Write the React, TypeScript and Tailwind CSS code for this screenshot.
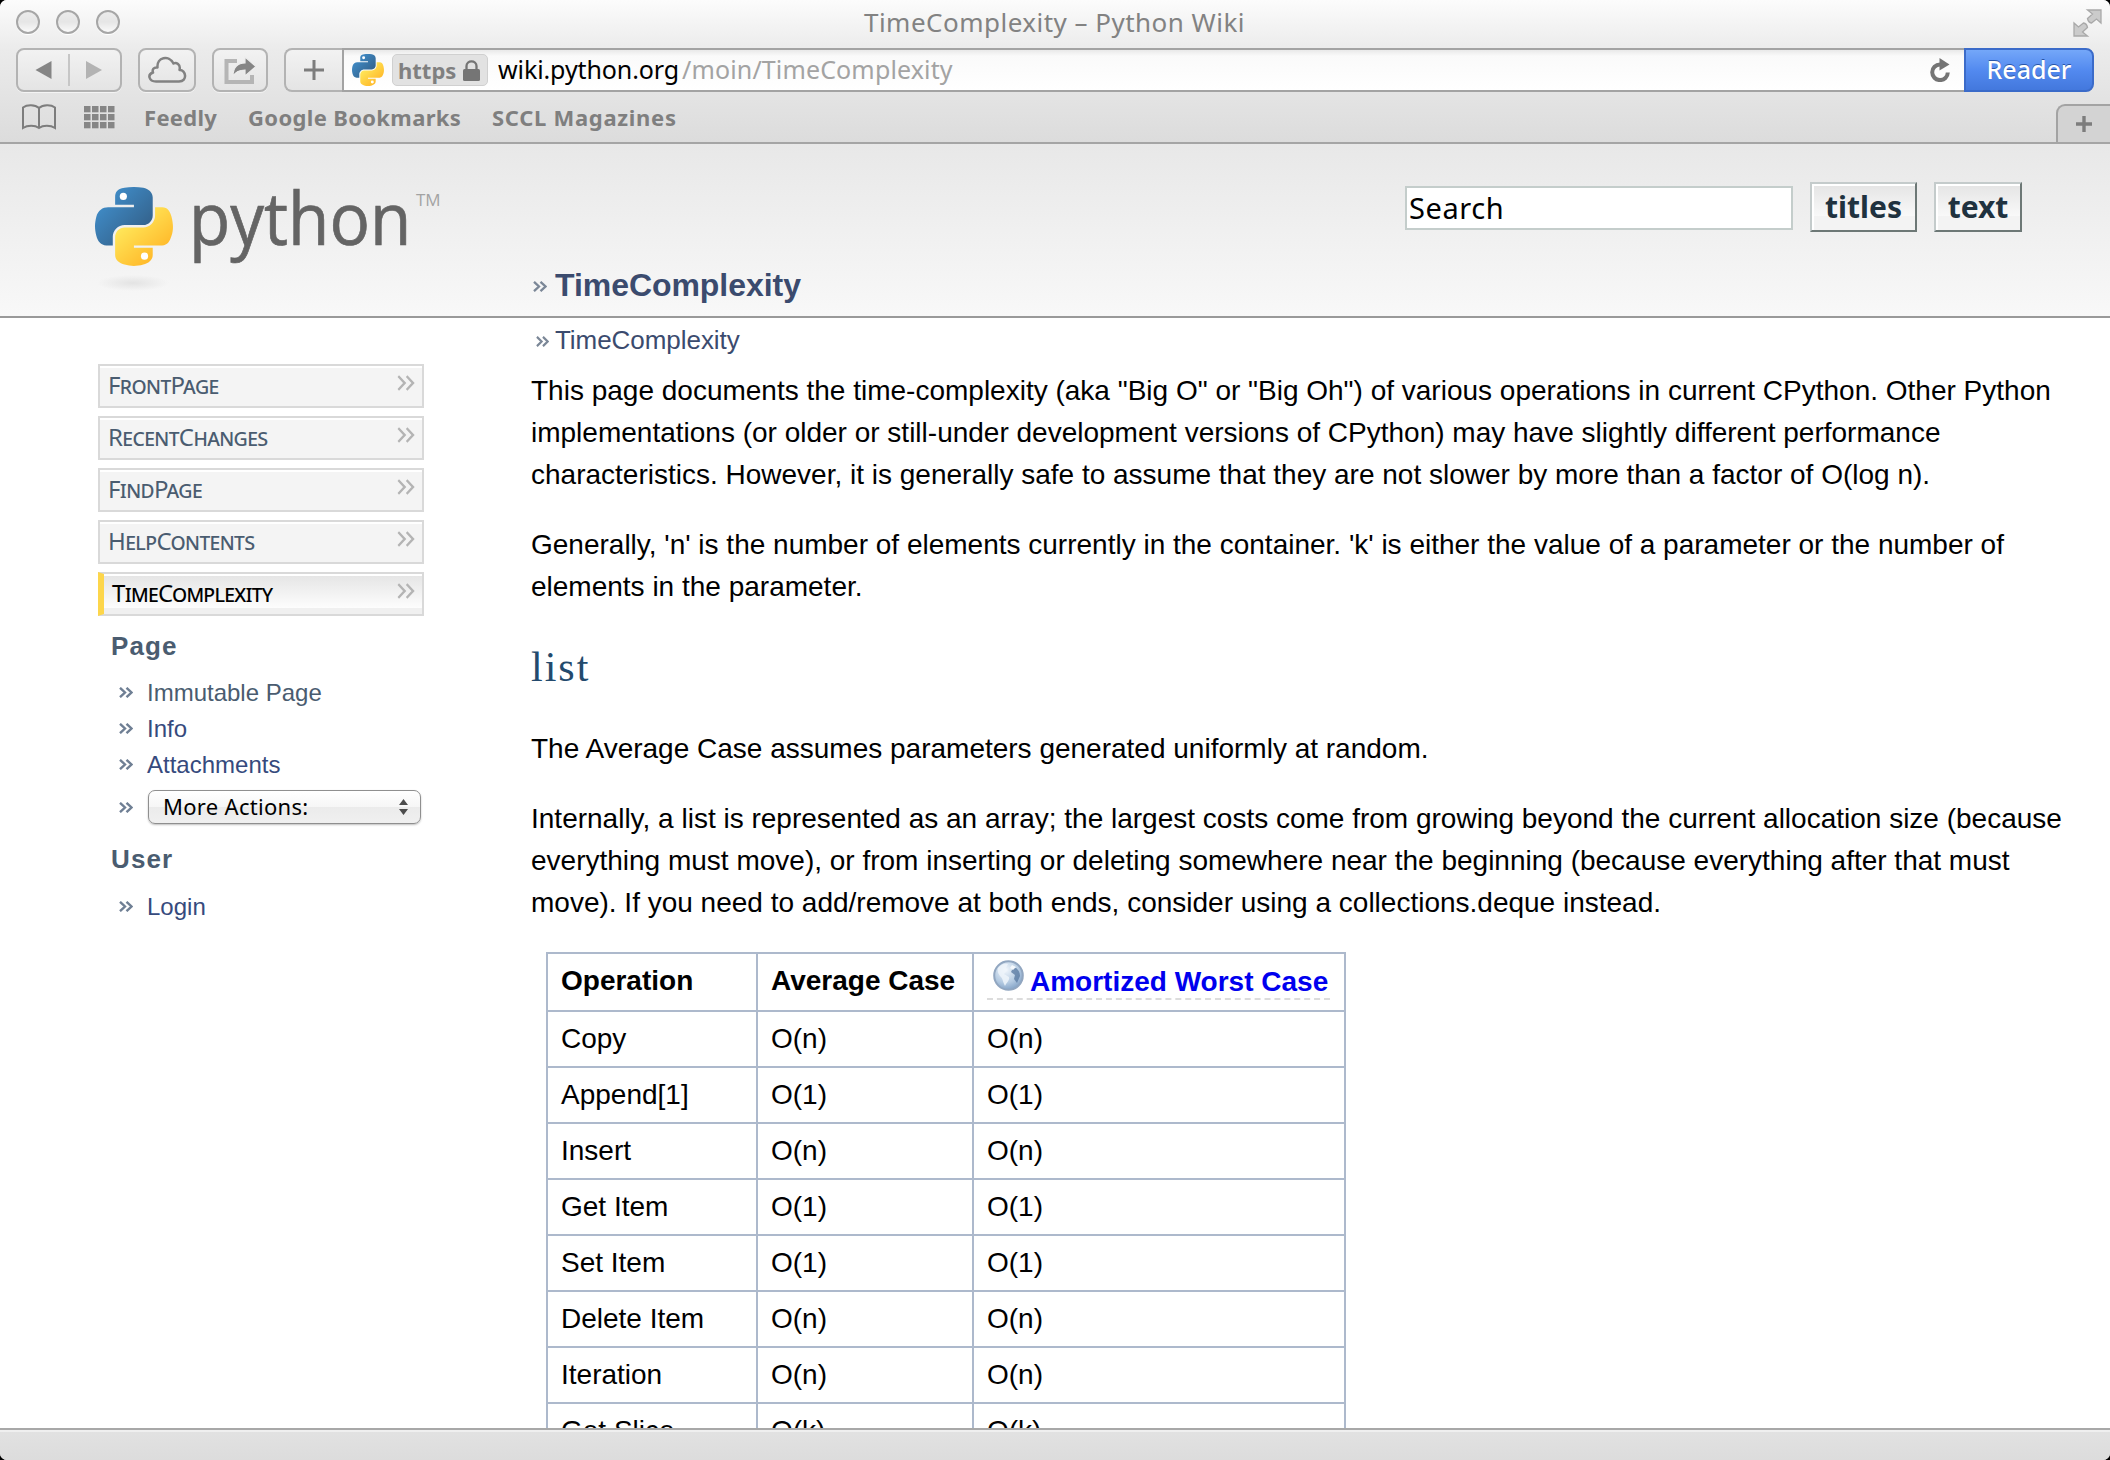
import type { ReactNode } from "react";

const OPERATIONS: [string, string, string][] = [
  ["Copy", "O(n)", "O(n)"],
  ["Append[1]", "O(1)", "O(1)"],
  ["Insert", "O(n)", "O(n)"],
  ["Get Item", "O(1)", "O(1)"],
  ["Set Item", "O(1)", "O(1)"],
  ["Delete Item", "O(n)", "O(n)"],
  ["Iteration", "O(n)", "O(n)"],
  ["Get Slice", "O(k)", "O(k)"],
];

const NAV = ["FrontPage", "RecentChanges", "FindPage", "HelpContents"];

function PythonMark({ id, className }: { id: string; className: string }) {
  return (
    <svg className={className} viewBox="0 0 111.2 112.4" preserveAspectRatio="none" aria-hidden="true">
      <defs>
        <linearGradient id={id + "-b"} x1="0.1" y1="0.1" x2="0.8" y2="0.8">
          <stop offset="0" stopColor="#4191cf" />
          <stop offset="1" stopColor="#34638d" />
        </linearGradient>
        <linearGradient id={id + "-y"} x1="0.2" y1="0.2" x2="0.75" y2="0.85">
          <stop offset="0" stopColor="#ffe95c" />
          <stop offset="1" stopColor="#ffb829" />
        </linearGradient>
      </defs>
      <path
        fill={`url(#${id}-b)`}
        d="M54.92 0C50.34.02 45.96.41 42.1 1.1 30.76 3.1 28.7 7.3 28.7 15.03v10.22h26.81v3.4H18.64c-7.8 0-14.62 4.69-16.75 13.6-2.46 10.21-2.57 16.59 0 27.25 1.9 7.94 6.46 13.6 14.25 13.6h9.22V70.84c0-8.85 7.65-16.65 16.75-16.65h26.78c7.45 0 13.4-6.14 13.4-13.63V15.03c0-7.26-6.13-12.72-13.4-13.94C64.28.33 59.5-.02 54.92 0Z"
      />
      <path
        fill={`url(#${id}-y)`}
        d="M85.64 28.66v11.9c0 9.24-7.83 17.01-16.75 17.01H42.1c-7.33 0-13.4 6.27-13.4 13.62v25.53c0 7.27 6.32 11.54 13.4 13.63 8.49 2.5 16.63 2.95 26.79 0 6.75-1.96 13.4-5.9 13.4-13.63V86.5H55.51v-3.4H95.7c7.79 0 10.7-5.44 13.4-13.6 2.8-8.4 2.68-16.47 0-27.25-1.92-7.75-5.6-13.59-13.4-13.59H85.64Z"
      />
      <circle cx="40.4" cy="13.4" r="5.1" fill="#fff" />
      <circle cx="70.6" cy="98.4" r="5.1" fill="#fff" />
    </svg>
  );
}

function Chevrons({ className }: { className: string }) {
  return (
    <svg className={className} viewBox="0 0 14 11" preserveAspectRatio="none" fill="none" stroke="currentColor" aria-hidden="true">
      <path d="M1 .8 6 5.5 1 10.2M7.5.8l5 4.7-5 4.7" />
    </svg>
  );
}

const chromeButton =
  "flex h-11 shrink-0 items-center justify-center rounded-[8px] border-2 border-[#b3b3b3] bg-gradient-to-b from-[#f2f2f2] to-[#e4e4e4] shadow-[0_1px_0_#f4f4f4]";

function Browser() {
  return (
    <div className="h-36 shrink-0 border-b-2 border-[#a5a5a5] bg-gradient-to-b from-[#fcfcfc] via-[#ebebeb] via-35% to-[#dcdcdc]">
      <div className="relative flex h-12 items-start">
        <div className="flex gap-4 pt-2.5 pl-4">
          {[0, 1, 2].map((i) => (
            <span key={i} className="size-6 rounded-full border-2 border-[#a6a6a6] bg-gradient-to-b from-[#ececec] via-[#e6e6e6] to-[#fafafa] shadow-[0_1px_0_#fff]" />
          ))}
        </div>
        <h1 className="absolute top-0 left-[864px] text-[26px] leading-[44px] tracking-[0.48px] whitespace-nowrap text-[#828282]">
          TimeComplexity – Python Wiki
        </h1>
        <svg className="absolute top-[9px] left-[2073px] h-7 w-[29px]" viewBox="0 0 29 28" fill="#cbcbcb" stroke="#a9a9a9" strokeWidth="1.3" aria-hidden="true">
          <path d="M14.5 1H28v13l-4.5-4-5 4c-2.5-.5-3.500-2-4-4.500l5-4.500z" />
          <path d="M14.500 27H1V14l4.500 4 5-4c2.500.5 3.500 2 4 4.500l-5 4.500z" />
        </svg>
      </div>

      <div className="flex h-11 pl-4">
        <div className={chromeButton + " w-[106px]"}>
          <svg className="h-full w-full" viewBox="0 0 101 40" aria-hidden="true">
            <path d="M17 20 33 11v18z" fill="#858585" />
            <path d="M83.500 20 67.500 11v18z" fill="#b3b3b3" />
            <path d="M50.500 4v32" stroke="#c6c6c6" strokeWidth="2" />
          </svg>
        </div>
        <div className={chromeButton + " ml-4 w-[58px]"}>
          <svg className="h-[30px] w-[40px]" viewBox="0 0 40 30" fill="none" stroke="#828282" strokeWidth="2.500" strokeLinejoin="round" aria-hidden="true">
            <path d="M9 26.500h23c9 0 7-12 .5-11.500C34 9 29 7 26.500 8.500 22-.5 9.500 2 10.500 12.500c-4-.5-5.500 2-4.500 5-6 2-4 9 3 9Z" />
          </svg>
        </div>
        <div className={chromeButton + " ml-4 w-[56px]"}>
          <svg className="h-7 w-[34px]" viewBox="0 0 34 28" fill="none" aria-hidden="true">
            <path d="M14 5H3.500v21H29v-7" stroke="#b5b5b5" strokeWidth="4" />
            <path d="M10 20c0-9 5-13 12-13V1l11 9.500L22 20v-6c-6 0-9 1.500-12 6z" fill="#858585" stroke="#ececec" strokeWidth="1.200" />
          </svg>
        </div>
        <div className="ml-4 flex h-11 w-[1810px] shrink-0">
          <div className="flex w-[58px] items-center justify-center rounded-l-[8px] border-2 border-r-0 border-[#b3b3b3] bg-gradient-to-b from-[#f2f2f2] to-[#e4e4e4]">
            <svg className="size-5" viewBox="0 0 20 20" stroke="#7d7d7d" strokeWidth="3" aria-hidden="true">
              <path d="M10 0v20M0 10h20" />
            </svg>
          </div>
          <div className="flex flex-1 items-center border-y-2 border-l-2 border-[#a3a3a3] bg-gradient-to-b from-[#e9e9e9] via-[#fafafa] via-15% to-white pl-2">
            <PythonMark id="fav" className="size-8" />
            <span className="ml-2 flex h-8 w-24 items-center gap-[7px] rounded-[5px] border border-[#d0d0d0] bg-[#e2e2e2] pl-[5px] text-[22px] font-bold text-[#808080]">
              https
              <svg className="h-[21px] w-[17px]" viewBox="0 0 17 21" aria-hidden="true">
                <path d="M3.500 10V6c0-6.200 10-6.200 10 0v4" fill="none" stroke="#757575" strokeWidth="2.300" />
                <rect y="9" width="17" height="12" rx="1.500" fill="#757575" />
              </svg>
            </span>
            <span className="ml-[10px] text-[25px] tracking-[-0.1px] text-black">wiki.python.org</span>
            <span className="ml-[3px] text-[25px] tracking-[0.13px] text-[#a3a3a3]">/moin/TimeComplexity</span>
            <svg className="mr-[13px] ml-auto h-6 w-[22px]" viewBox="0 0 22 24" aria-hidden="true">
              <path d="M11 6.500A7.800 7.800 0 1 0 18.800 14.500" fill="none" stroke="#747474" strokeWidth="4" />
              <path d="M10.500 0v12.500L20.500 6.500z" fill="#747474" />
            </svg>
          </div>
          <div className="flex w-[130px] items-center justify-center rounded-r-[8px] border-2 border-[#3b6bc9] bg-gradient-to-b from-[#74a7f9] via-[#5289ef] via-52% to-[#4378dd] text-[25px] font-medium text-white [text-shadow:0_-1px_0_#2a55a8]">
            Reader
          </div>
        </div>
      </div>

      <div className="flex h-[50px] items-center pl-[21px] text-[22px] font-bold text-[#7f7f7f]">
        <svg className="h-[26px] w-[36px]" viewBox="0 0 36 26" fill="none" stroke="#7d7d7d" strokeWidth="2" aria-hidden="true">
          <path d="M18 4C14 .5 6 .5 2 3.500V24c4.500-3 12-3 16 0 4-3 11.500-3 16 0V3.500C30 .5 22 .5 18 4ZM18 4v20" />
        </svg>
        <svg className="ml-[27px] h-[23px] w-[31px]" viewBox="0 0 31 23" fill="#868686" aria-hidden="true">
          {[0, 8, 16].map((y) =>
            [0, 8, 16, 24].map((x) => <rect key={x + "-" + y} x={x} y={y} width="6.500" height="6.300" />),
          )}
        </svg>
        <span className="ml-[29px] w-[104px] tracking-[0.3px]">Feedly</span>
        <span className="w-[244px] tracking-[0.35px]">Google Bookmarks</span>
        <span className="tracking-[0.7px]">SCCL Magazines</span>
        <div className="ml-auto flex h-[38px] w-[54px] items-center justify-center self-end rounded-tl-[9px] border-t-2 border-l-2 border-[#a3a3a3] bg-[#d3d3d3]">
          <svg className="-ml-px size-4" viewBox="0 0 16 16" stroke="#7d7d7d" strokeWidth="3.400" aria-hidden="true">
            <path d="M8 0v16M0 8h16" />
          </svg>
        </div>
      </div>
    </div>
  );
}

function SearchButton({ children, className }: { children: ReactNode; className: string }) {
  return (
    <button
      className={
        "h-[50px] border-2 border-t-[#c4cbcb] border-r-[#6d7876] border-b-[#6d7876] border-l-[#c4cbcb] bg-[linear-gradient(to_bottom,#e4e4e4,#f9f9f9_70%,#f3f3f3_70%)] text-[30px] leading-[46px] font-bold text-[#20323f] shadow-[inset_2px_2px_0_#fff] " +
        className
      }
    >
      {children}
    </button>
  );
}

function SiteHeader() {
  return (
    <header className="flex h-[174px] shrink-0 border-b-2 border-[#999] bg-gradient-to-b from-[#e8e8e8] to-[#f8f8f8]">
      <div className="relative w-[531px] shrink-0 pt-[43px] pl-[95px]">
        <PythonMark id="logo" className="h-[79px] w-[78px]" />
        <div className="mt-[9px] ml-[2px] h-4 w-[72px] bg-[radial-gradient(closest-side,#e3e3e3,transparent)]" />
        <span className="absolute top-[26px] left-[189px] origin-left scale-x-[0.93] font-['Open_Sans',sans-serif] text-[72.5px] leading-[94px] text-[#646464] [-webkit-text-stroke:0.7px_#646464]">
          python
        </span>
        <span className="absolute top-[45px] left-[416px] font-['Open_Sans',sans-serif] text-[17px] leading-[22px] text-[#a3a3a3]">TM</span>
      </div>
      <div className="flex flex-1 flex-col">
        <div className="flex h-[121px] justify-end pt-[38px] pr-[88px]">
          <div className="mt-1 mr-[17px] h-11 w-[388px] border-2 border-[#c4cdcb] bg-white pl-0.5 text-[29px] leading-10 tracking-[0.6px] text-black">
            Search
          </div>
          <SearchButton className="mr-[17px] w-[107px]">titles</SearchButton>
          <SearchButton className="w-[88px]">text</SearchButton>
        </div>
        <div className="flex h-10 items-center font-['Liberation_Sans',Arial,sans-serif] text-[32px] font-bold tracking-[-0.05px] text-[#3b4b6e]">
          <Chevrons className="mt-0.5 mr-[8px] ml-[2px] h-[11px] w-[14px] stroke-[2.3] text-[#7b8797]" />
          TimeComplexity
        </div>
      </div>
    </header>
  );
}

function SideItem({ children, className }: { children: ReactNode; className: string }) {
  return (
    <li className="flex h-9 items-center">
      <Chevrons className="mr-[14px] ml-[21px] h-[11px] w-[14px] stroke-[2.4] text-[#6f7f94]" />
      <span className={"pt-px leading-9 " + className}>{children}</span>
    </li>
  );
}

function Sidebar() {
  return (
    <nav className="w-[531px] shrink-0 pt-[46px] pl-[98px] font-['Liberation_Sans',Arial,sans-serif] text-2xl">
      <ul className="flex w-[326px] flex-col gap-2 font-['Noto_Sans',sans-serif] tracking-[-0.6px] [font-variant:small-caps]">
        {NAV.map((name) => (
          <li key={name} className="flex h-11 justify-between border-2 border-[#d9d9d9] bg-[#f4f4f4] pr-[7px] pl-2 leading-[38px] text-[#4a5c70] shadow-[inset_0_2px_0_#fff]">
            {name}
            <Chevrons className="mt-[9px] h-4 w-[18px] stroke-[1.700] text-[#b4b4b4]" />
          </li>
        ))}
        <li className="flex h-11 justify-between border-2 border-l-[6px] border-[#d9d9d9] border-l-[#fdd64b] bg-[linear-gradient(to_bottom,#e4e4e4,#fdfdfd_85%,#f0f0f0_85%)] pr-[7px] pl-2 leading-[38px] tracking-[-0.7px] text-black shadow-[inset_0_2px_0_#fff]">
          TimeComplexity
          <Chevrons className="mt-[9px] h-4 w-[18px] stroke-[1.700] text-[#b4b4b4]" />
        </li>
      </ul>
      <h2 className="mt-2.5 mb-2 ml-[13px] text-[26px] leading-10 font-bold tracking-[1.1px] text-[#4a5c70]">Page</h2>
      <ul>
        <SideItem className="text-[#4a5c70]">Immutable Page</SideItem>
        <SideItem className="text-[#364a7d]">Info</SideItem>
        <SideItem className="text-[#364a7d]">Attachments</SideItem>
        <li className="mt-[7px] flex h-9 items-center">
          <Chevrons className="mr-[15px] ml-[21px] h-[11px] w-[14px] stroke-[2.4] text-[#6f7f94]" />
          <div className="flex h-[34px] w-[273px] items-center justify-between rounded-[7px] border-[1.500px] border-[#8f8f8f] bg-[linear-gradient(to_bottom,#fff,#f6f6f6_50%,#ebebeb_50%,#f0f0f0)] pr-3 pb-0.5 pl-[14px] font-['Noto_Sans',sans-serif] text-[22px] leading-[29px] tracking-[0.3px] text-black shadow-[0_1px_2px_rgba(0,0,0,0.25)]">
            More Actions:
            <svg className="mt-0.5 h-4 w-[9px]" viewBox="0 0 9 16" fill="#4c4c4c" aria-hidden="true">
              <path d="M4.500 0 9 6H0zM4.500 16 0 10h9z" />
            </svg>
          </div>
        </li>
      </ul>
      <h2 className="mt-3.5 mb-[9px] ml-[13px] text-[26px] leading-10 font-bold tracking-[1.1px] text-[#4a5c70]">User</h2>
      <ul>
        <SideItem className="text-[#364a7d]">Login</SideItem>
      </ul>
    </nav>
  );
}

const cell = "border-r-2 border-b-2 border-[#adb9cc] p-0 pl-[13px] text-left align-top leading-[54px]";

function OperationsTable() {
  return (
    <table className="mt-[28px] ml-[15px] w-[800px] table-fixed border-separate border-spacing-0 border-t-2 border-l-2 border-[#adb9cc]">
      <thead>
        <tr className="h-[58px] font-bold">
          <th className={cell + " w-[210px]"}>Operation</th>
          <th className={cell + " w-[216px]"}>Average Case</th>
          <th className={cell + " w-[372px]"}>
            <a className="flex h-[46px] w-[343px] items-start border-b-2 border-dashed border-[#dcdcdc] pl-[6px] whitespace-nowrap text-[#0000ee]">
              <svg className="mt-[6px] mr-[6px] h-[31px] w-[31px] shrink-0" viewBox="0 0 31 31" aria-hidden="true">
                <defs>
                  <radialGradient id="globe" cx="0.4" cy="0.3" r="0.75">
                    <stop offset="0" stopColor="#f2f7fc" />
                    <stop offset="0.6" stopColor="#b5cbe2" />
                    <stop offset="1" stopColor="#7f9fc4" />
                  </radialGradient>
                </defs>
                <circle cx="15.500" cy="15.500" r="14.300" fill="url(#globe)" stroke="#91a6c0" strokeWidth="2" />
                <path d="M5 8c3-4 7-5 10-4l-2 4 2 2-4 4 5 3c1 3-2 5-4 9-2-3-2-7-4-9s-4-5-3-9z" fill="#eef4fa" opacity="0.85" />
                <path d="M20 8c4-1 7 3 7 8l-3 7-3-4 1-4-4-3z" fill="#55779f" opacity="0.75" />
                <path d="M19 5l4 2-3 3-3-2z" fill="#f4f8fc" />
              </svg>
              <span className="mt-px">Amortized Worst Case</span>
            </a>
          </th>
        </tr>
      </thead>
      <tbody>
        {OPERATIONS.map(([name, average, worst]) => (
          <tr key={name} className="h-14">
            <td className={cell}>{name}</td>
            <td className={cell}>{average}</td>
            <td className={cell}>{worst}</td>
          </tr>
        ))}
      </tbody>
    </table>
  );
}

function Article() {
  return (
    <main className="w-[1579px] shrink-0 font-['Liberation_Sans',Arial,sans-serif] text-[28px] leading-[42px] whitespace-nowrap text-black">
      <div className="mb-[9px] flex h-[43px] items-center pt-px text-[26px] tracking-[-0.05px] text-[#3b4b6e]">
        <Chevrons className="mt-0.5 mr-[6px] ml-[5px] h-[11px] w-[13px] stroke-[2.3] text-[#7b8797]" />
        TimeComplexity
      </div>
      <p>
        This page documents the time-complexity (aka "Big O" or "Big Oh") of various operations in current CPython. Other Python
        <br />
        implementations (or older or still-under development versions of CPython) may have slightly different performance
        <br />
        characteristics. However, it is generally safe to assume that they are not slower by more than a factor of O(log n).
      </p>
      <p className="mt-7">
        Generally, 'n' is the number of elements currently in the container. 'k' is either the value of a parameter or the number of
        <br />
        elements in the parameter.
      </p>
      <h2 className="mt-[38px] mb-10 font-['Liberation_Serif',serif] text-[42px] leading-[42px] tracking-[2px] text-[#234a6d]">list</h2>
      <p>The Average Case assumes parameters generated uniformly at random.</p>
      <p className="mt-7">
        Internally, a list is represented as an array; the largest costs come from growing beyond the current allocation size (because
        <br />
        everything must move), or from inserting or deleting somewhere near the beginning (because everything after that must
        <br />
        move). If you need to add/remove at both ends, consider using a collections.deque instead.
      </p>
      <OperationsTable />
    </main>
  );
}

export default function App() {
  return (
    <div className="h-[1460px] w-[2110px] bg-black">
      <div className="flex h-full w-full flex-col overflow-hidden rounded-[7px] bg-white font-['Noto_Sans',sans-serif]">
        <Browser />
        <SiteHeader />
        <div className="flex min-h-0 flex-1 overflow-hidden">
          <Sidebar />
          <Article />
        </div>
        <footer className="h-8 shrink-0 border-t-2 border-[#a8a8a8] bg-gradient-to-b from-[#e2e2e2] to-[#dcdcdc] shadow-[inset_0_2px_0_#efefef]" />
      </div>
    </div>
  );
}
